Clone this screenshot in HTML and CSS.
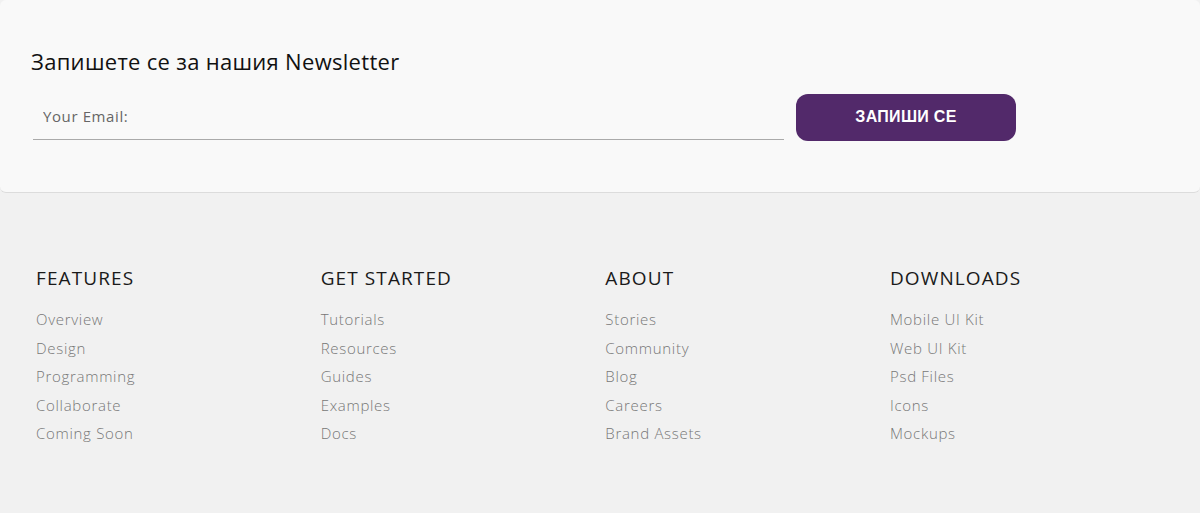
FILE: index.html
```html
<!DOCTYPE html>
<html>
 <head>
  <meta charset="UTF-8">
  <title>Newsletter</title>
  <link rel="stylesheet" href="styles.css">
 </head>
 <body>
  <div class="news">
   <h2 class="news-title">Запишете се за нашия Newsletter</h2>
   <form class="news-form">
    <input class="news-input" type="email" placeholder="Your Email:" />
    <button class="news-btn" type="button">ЗАПИШИ СЕ</button>
   </form>
  </div>
  <div class="foot">
   <div class="foot-col">
    <h3>FEATURES</h3>
    <ul>
     <li><a href="#">Overview</a></li>
     <li><a href="#">Design</a></li>
     <li><a href="#">Programming</a></li>
     <li><a href="#">Collaborate</a></li>
     <li><a href="#">Coming Soon</a></li>
    </ul>
   </div>
   <div class="foot-col">
    <h3>GET STARTED</h3>
    <ul>
     <li><a href="#">Tutorials</a></li>
     <li><a href="#">Resources</a></li>
     <li><a href="#">Guides</a></li>
     <li><a href="#">Examples</a></li>
     <li><a href="#">Docs</a></li>
    </ul>
   </div>
   <div class="foot-col">
    <h3>ABOUT</h3>
    <ul>
     <li><a href="#">Stories</a></li>
     <li><a href="#">Community</a></li>
     <li><a href="#">Blog</a></li>
     <li><a href="#">Careers</a></li>
     <li><a href="#">Brand Assets</a></li>
    </ul>
   </div>
   <div class="foot-col">
    <h3>DOWNLOADS</h3>
    <ul>
     <li><a href="#">Mobile UI Kit</a></li>
     <li><a href="#">Web UI Kit</a></li>
     <li><a href="#">Psd Files</a></li>
     <li><a href="#">Icons</a></li>
     <li><a href="#">Mockups</a></li>
    </ul>
   </div>
  </div>
 </body>
</html>
```

FILE: styles.css
```css
*{ margin:0; padding:0; box-sizing:border-box;}

body{
 background:#f1f1f1;
 font-family:'Open Sans', 'Liberation Sans', sans-serif;
 height:513px;
 overflow:hidden;
}

.news{
 height:193px;
 background:#f9f9f9;
 border-bottom:1px solid #dcdcdc;
 border-radius:6px;
 padding:45px 33px 0 31px;
}

.news-title{
 font-size:22px;
 font-weight:400;
 color:#111;
 line-height:32px;
 letter-spacing:0.3px;
}

.news-form{
 display:flex;
 align-items:flex-end;
 gap:12px;
 margin-top:16px;
 padding-left:2px;
}

.news-input{
 width:751px;
 height:47px;
 border:0;
 border-bottom:1px solid #aaa;
 background:transparent;
 padding:0 10px 0;
 font-family:'Open Sans', sans-serif;
 font-size:15px;
 letter-spacing:0.6px;
 outline:none;
}
.news-input::placeholder{ color:#666;}

.news-btn{
 width:220px;
 height:47px;
 border:0;
 border-radius:12px;
 background:#52296a;
 color:#fff;
 font-family:'Liberation Sans', Arial, sans-serif;
 font-size:16px;
 font-weight:bold;
 letter-spacing:0.3px;
 padding-bottom:2px;
 margin-bottom:-1px;
 cursor:pointer;
}

.foot{
 display:grid;
 grid-template-columns:repeat(4, 284.67px);
 padding:73px 0 0 36px;
}

.foot-col h3{
 font-size:19px;
 font-weight:400;
 color:#1a1a1a;
 line-height:24px;
 letter-spacing:1.1px;
}

.foot-col ul{
 list-style:none;
 margin-top:15px;
}

.foot-col li{
 line-height:28.5px;
 font-size:15px;
 letter-spacing:0.7px;
}

.foot-col a{
 color:#777;
 text-decoration:none;
 font-weight:300;
}
```
